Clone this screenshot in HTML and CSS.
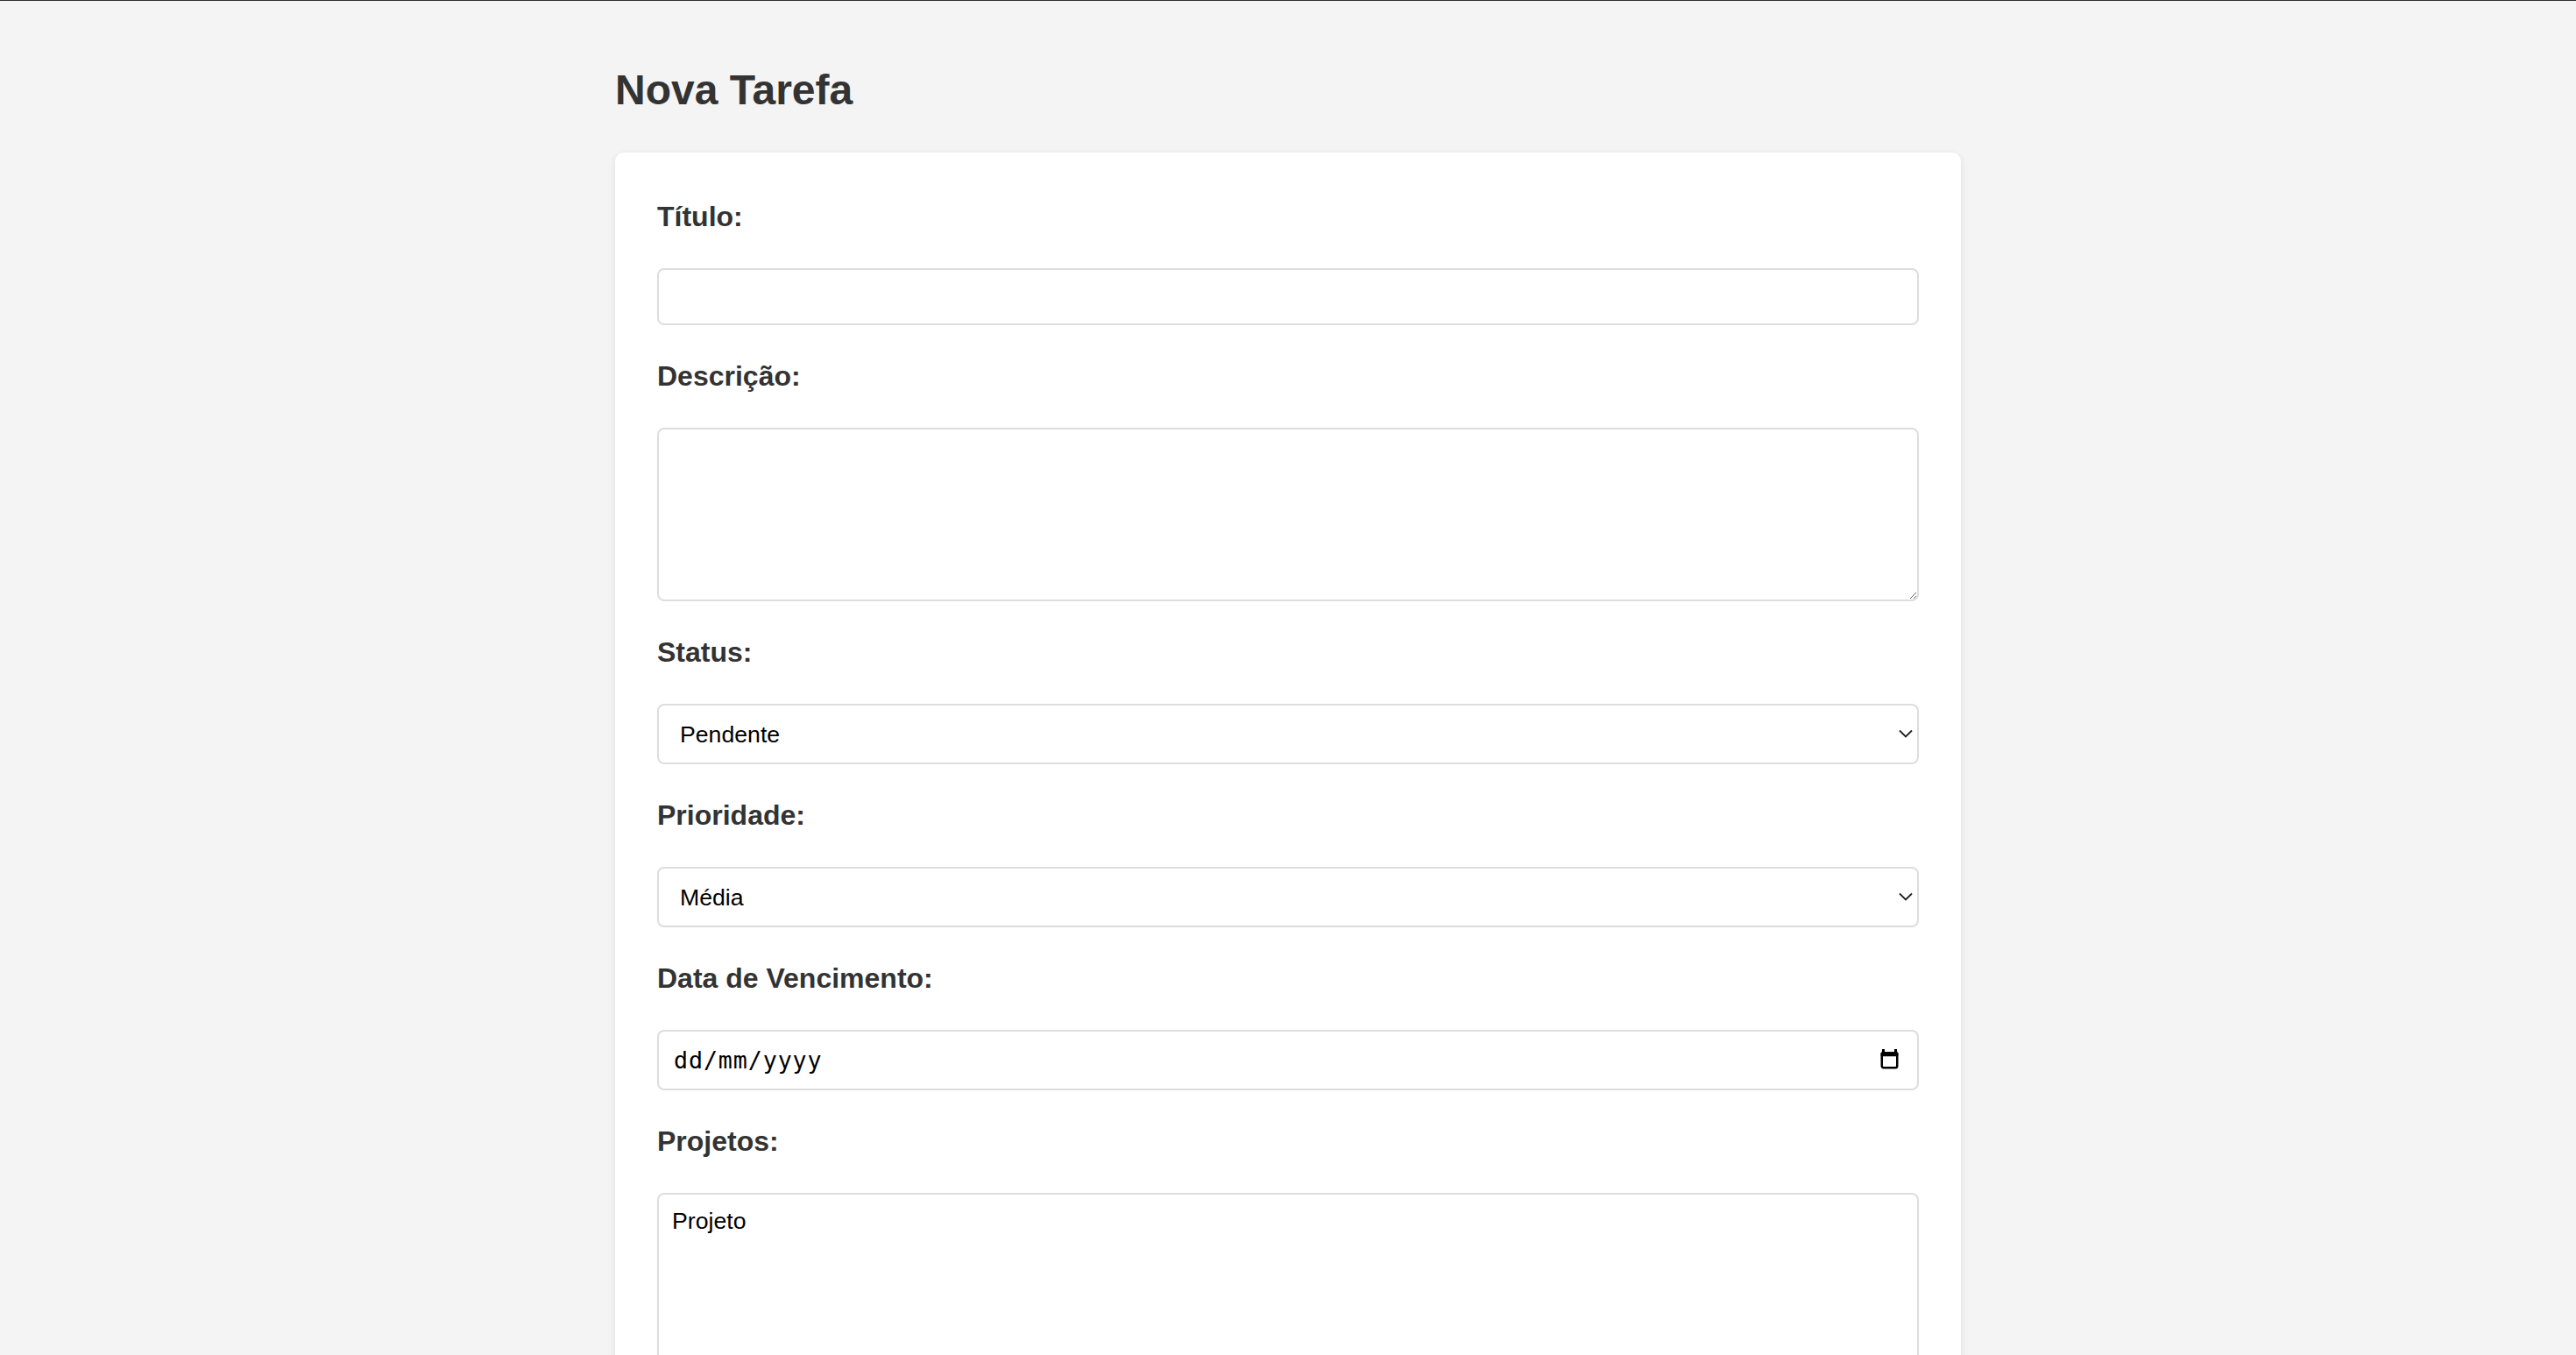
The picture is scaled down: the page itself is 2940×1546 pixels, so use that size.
FILE: index.html
```html
<!DOCTYPE html>
<html lang="pt-BR">
<head>
<meta charset="utf-8">
<title>Nova Tarefa</title>
<link rel="stylesheet" href="styles.css">
</head>
<body>
<main class="page">
  <h1 class="page-title">Nova Tarefa</h1>
  <form class="card">
    <label class="field-label" for="titulo">Título:</label>
    <input class="field field-text" id="titulo" type="text">

    <label class="field-label" for="descricao">Descrição:</label>
    <textarea class="field field-area" id="descricao"></textarea>

    <label class="field-label" for="status">Status:</label>
    <div class="select-wrap">
      <select class="field field-select" id="status">
        <option>Pendente</option>
        <option>Em andamento</option>
        <option>Concluída</option>
      </select>
      <svg class="chevron" width="16" height="10" viewBox="0 0 16 10"><polyline points="1,1.5 8,8.5 15,1.5" fill="none" stroke="#1f1f1f" stroke-width="1.8"/></svg>
    </div>

    <label class="field-label" for="prioridade">Prioridade:</label>
    <div class="select-wrap">
      <select class="field field-select" id="prioridade">
        <option>Média</option>
        <option>Baixa</option>
        <option>Alta</option>
      </select>
      <svg class="chevron" width="16" height="10" viewBox="0 0 16 10"><polyline points="1,1.5 8,8.5 15,1.5" fill="none" stroke="#1f1f1f" stroke-width="1.8"/></svg>
    </div>

    <label class="field-label" for="vencimento">Data de Vencimento:</label>
    <div class="field field-date" id="vencimento" tabindex="0">
      <span class="date-placeholder">dd/mm/yyyy</span>
      <svg class="calendar" width="21" height="23" viewBox="0 0 21 23">
        <rect x="1.75" y="4.5" width="17.5" height="16.75" rx="2" fill="none" stroke="#000" stroke-width="2.5"/>
        <rect x="0.5" y="3.25" width="20" height="5" rx="1.5" fill="#000"/>
        <rect x="2" y="0" width="3" height="5" fill="#000"/>
        <rect x="16" y="0" width="3" height="5" fill="#000"/>
      </svg>
    </div>

    <label class="field-label" for="projetos">Projetos:</label>
    <select class="field field-multi" id="projetos" multiple>
      <option>Projeto</option>
    </select>
  </form>
</main>
</body>
</html>
```

FILE: styles.css
```css
html, body {
  margin: 0;
  padding: 0;
}

body {
  background: #f4f4f4;
  border-top: 1px solid #2e2e2e;
  font-family: "Liberation Sans", Arial, Helvetica, sans-serif;
  color: #333;
}

.page {
  width: 1536px;
  margin: 0 auto;
  padding-top: 74px;
}

.page-title {
  margin: 0 0 44px;
  font-size: 48px;
  line-height: 55px;
  font-weight: 700;
  color: #333;
}

.card {
  display: flex;
  flex-direction: column;
  background: #fff;
  border-radius: 10px;
  box-shadow: 0 2px 10px rgba(0, 0, 0, 0.09);
  padding: 55px 48px 48px;
}

.field-label {
  display: block;
  font-size: 32px;
  line-height: 37px;
  font-weight: 700;
  color: #333;
  margin: 0 0 40px;
}

.field {
  box-sizing: border-box;
  width: 100%;
  margin: 0 0 40px;
  border: 2px solid #dddddd;
  border-radius: 8px;
  background: #fff;
  font-family: "Liberation Sans", Arial, Helvetica, sans-serif;
  font-size: 26.67px;
  color: #000;
  outline: none;
}

.field-text {
  height: 65px;
  padding: 0 16px;
}

.field-area {
  display: block;
  height: 198px;
  padding: 14px 16px;
  resize: both;
}

.select-wrap {
  position: relative;
  margin: 0 0 40px;
}

.select-wrap .field {
  margin: 0;
}

.field-select {
  display: block;
  height: 69px;
  padding: 0 40px 0 24px;
  -webkit-appearance: none;
  appearance: none;
}

.chevron {
  position: absolute;
  right: 7px;
  top: 29px;
  pointer-events: none;
}

.field-date {
  display: flex;
  align-items: center;
  justify-content: space-between;
  height: 69px;
  padding: 0 21px 0 17px;
}

.date-placeholder {
  font-family: "DejaVu Sans Mono", "Liberation Mono", monospace;
  font-size: 26.67px;
  letter-spacing: 0.9px;
  color: #000;
}

.calendar {
  display: block;
  margin-top: -2px;
}

.field-multi {
  display: block;
  height: 230px;
  padding: 15px 13px;
  overflow: hidden;
}

.field-multi option {
  padding: 0 2px 1px;
  color: #000;
}
```
